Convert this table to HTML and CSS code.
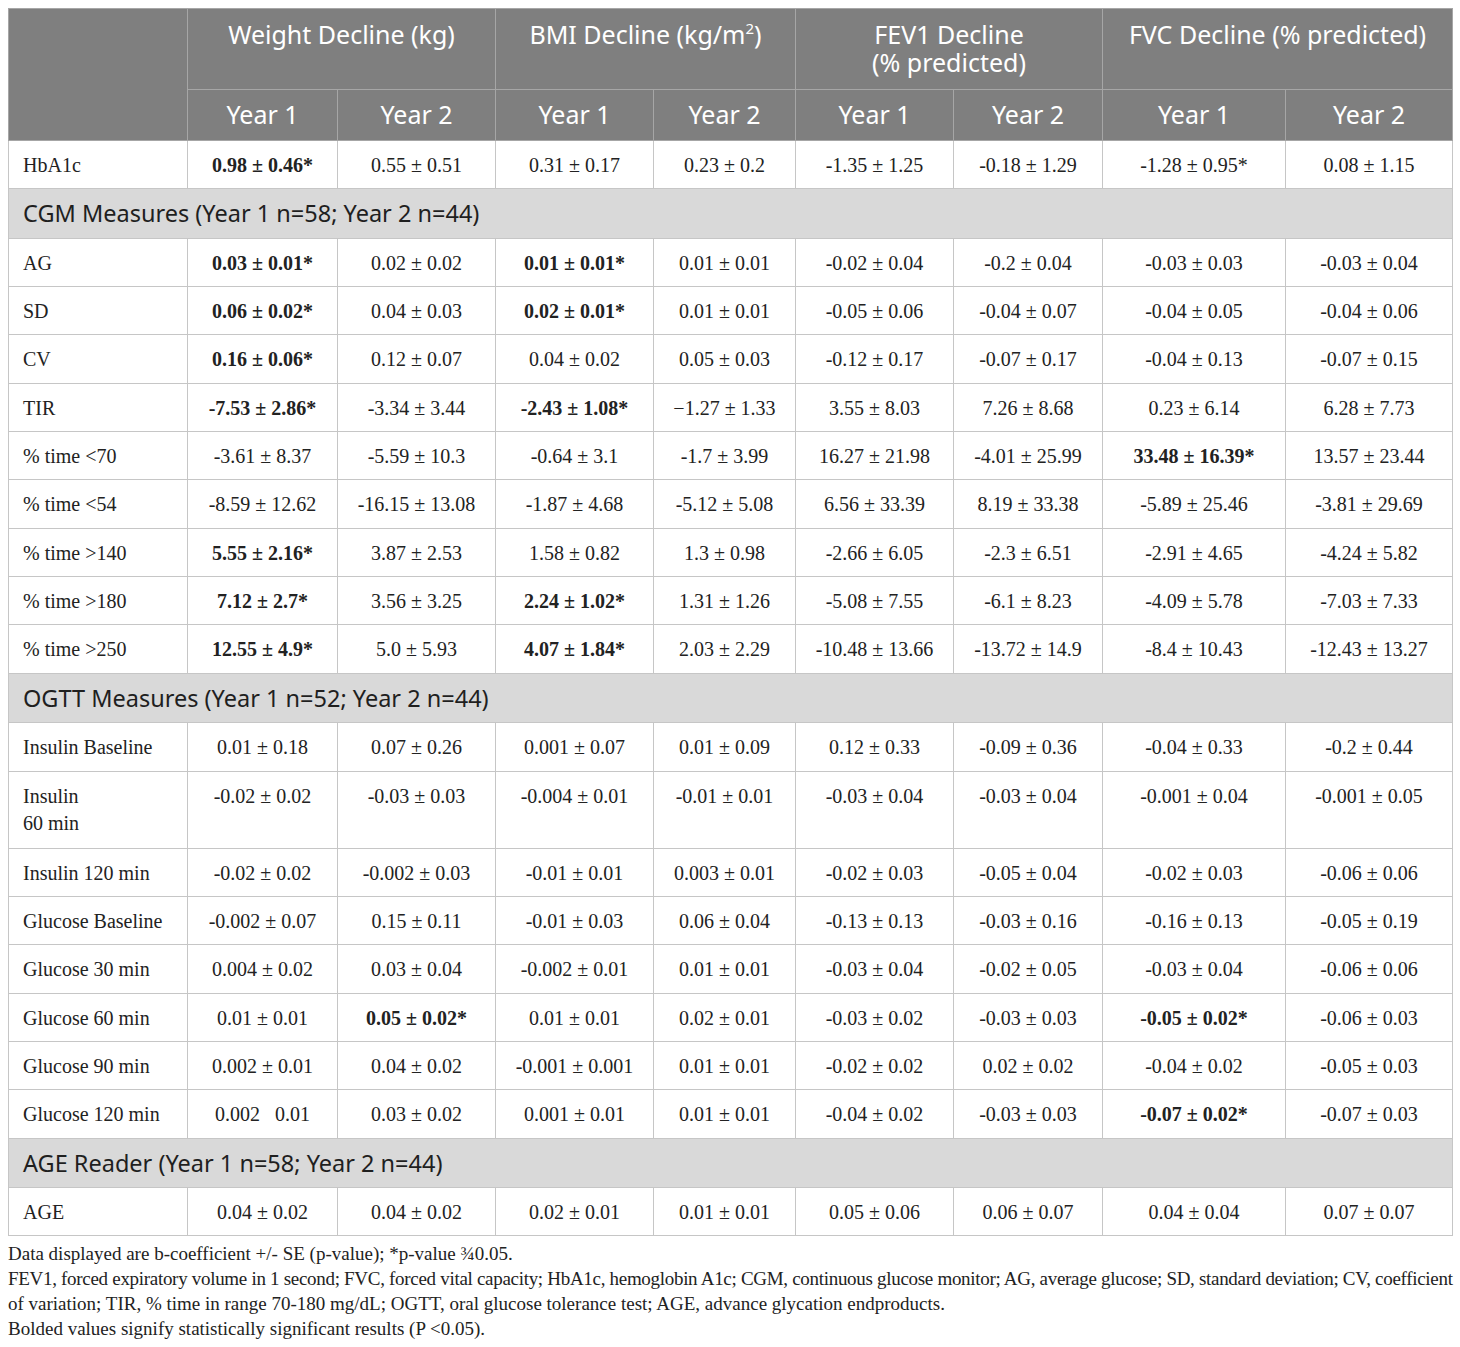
FILE: index.html
```html
<!DOCTYPE html>
<html>
<head>
<meta charset="utf-8">
<link rel="stylesheet" href="styles.css">
</head>
<body>
<div class="wrap">
<table class="tbl">
  <colgroup>
    <col class="c0"><col class="c1"><col class="c2"><col class="c3"><col class="c4"><col class="c5"><col class="c6"><col class="c7"><col class="c8">
  </colgroup>
  <thead>
    <tr class="h1">
      <th rowspan="2"></th>
      <th colspan="2">Weight Decline (kg)</th>
      <th colspan="2">BMI Decline (kg/m<sup>2</sup>)</th>
      <th colspan="2"><span class="ln">FEV1 Decline</span><span class="ln">(% predicted)</span></th>
      <th colspan="2">FVC Decline (% predicted)</th>
    </tr>
    <tr class="h2">
      <th>Year 1</th><th>Year 2</th><th>Year 1</th><th>Year 2</th><th>Year 1</th><th>Year 2</th><th>Year 1</th><th>Year 2</th>
    </tr>
  </thead>
  <tbody>
    <tr><td>HbA1c</td><td><b>0.98 ± 0.46*</b></td><td>0.55 ± 0.51</td><td>0.31 ± 0.17</td><td>0.23 ± 0.2</td><td>-1.35 ± 1.25</td><td>-0.18 ± 1.29</td><td>-1.28 ± 0.95*</td><td>0.08 ± 1.15</td></tr>
    <tr class="sec"><td colspan="9">CGM Measures (Year 1 n=58; Year 2 n=44)</td></tr>
    <tr><td>AG</td><td><b>0.03 ± 0.01*</b></td><td>0.02 ± 0.02</td><td><b>0.01 ± 0.01*</b></td><td>0.01 ± 0.01</td><td>-0.02 ± 0.04</td><td>-0.2 ± 0.04</td><td>-0.03 ± 0.03</td><td>-0.03 ± 0.04</td></tr>
    <tr><td>SD</td><td><b>0.06 ± 0.02*</b></td><td>0.04 ± 0.03</td><td><b>0.02 ± 0.01*</b></td><td>0.01 ± 0.01</td><td>-0.05 ± 0.06</td><td>-0.04 ± 0.07</td><td>-0.04 ± 0.05</td><td>-0.04 ± 0.06</td></tr>
    <tr><td>CV</td><td><b>0.16 ± 0.06*</b></td><td>0.12 ± 0.07</td><td>0.04 ± 0.02</td><td>0.05 ± 0.03</td><td>-0.12 ± 0.17</td><td>-0.07 ± 0.17</td><td>-0.04 ± 0.13</td><td>-0.07 ± 0.15</td></tr>
    <tr><td>TIR</td><td><b>-7.53 ± 2.86*</b></td><td>-3.34 ± 3.44</td><td><b>-2.43 ± 1.08*</b></td><td>−1.27 ± 1.33</td><td>3.55 ± 8.03</td><td>7.26 ± 8.68</td><td>0.23 ± 6.14</td><td>6.28 ± 7.73</td></tr>
    <tr><td>% time &lt;70</td><td>-3.61 ± 8.37</td><td>-5.59 ± 10.3</td><td>-0.64 ± 3.1</td><td>-1.7 ± 3.99</td><td>16.27 ± 21.98</td><td>-4.01 ± 25.99</td><td><b>33.48 ± 16.39*</b></td><td>13.57 ± 23.44</td></tr>
    <tr><td>% time &lt;54</td><td>-8.59 ± 12.62</td><td>-16.15 ± 13.08</td><td>-1.87 ± 4.68</td><td>-5.12 ± 5.08</td><td>6.56 ± 33.39</td><td>8.19 ± 33.38</td><td>-5.89 ± 25.46</td><td>-3.81 ± 29.69</td></tr>
    <tr><td>% time &gt;140</td><td><b>5.55 ± 2.16*</b></td><td>3.87 ± 2.53</td><td>1.58 ± 0.82</td><td>1.3 ± 0.98</td><td>-2.66 ± 6.05</td><td>-2.3 ± 6.51</td><td>-2.91 ± 4.65</td><td>-4.24 ± 5.82</td></tr>
    <tr><td>% time &gt;180</td><td><b>7.12 ± 2.7*</b></td><td>3.56 ± 3.25</td><td><b>2.24 ± 1.02*</b></td><td>1.31 ± 1.26</td><td>-5.08 ± 7.55</td><td>-6.1 ± 8.23</td><td>-4.09 ± 5.78</td><td>-7.03 ± 7.33</td></tr>
    <tr><td>% time &gt;250</td><td><b>12.55 ± 4.9*</b></td><td>5.0 ± 5.93</td><td><b>4.07 ± 1.84*</b></td><td>2.03 ± 2.29</td><td>-10.48 ± 13.66</td><td>-13.72 ± 14.9</td><td>-8.4 ± 10.43</td><td>-12.43 ± 13.27</td></tr>
    <tr class="sec"><td colspan="9">OGTT Measures (Year 1 n=52; Year 2 n=44)</td></tr>
    <tr><td>Insulin Baseline</td><td>0.01 ± 0.18</td><td>0.07 ± 0.26</td><td>0.001 ± 0.07</td><td>0.01 ± 0.09</td><td>0.12 ± 0.33</td><td>-0.09 ± 0.36</td><td>-0.04 ± 0.33</td><td>-0.2 ± 0.44</td></tr>
    <tr class="tall"><td>Insulin<br>60 min</td><td>-0.02 ± 0.02</td><td>-0.03 ± 0.03</td><td>-0.004 ± 0.01</td><td>-0.01 ± 0.01</td><td>-0.03 ± 0.04</td><td>-0.03 ± 0.04</td><td>-0.001 ± 0.04</td><td>-0.001 ± 0.05</td></tr>
    <tr><td>Insulin 120 min</td><td>-0.02 ± 0.02</td><td>-0.002 ± 0.03</td><td>-0.01 ± 0.01</td><td>0.003 ± 0.01</td><td>-0.02 ± 0.03</td><td>-0.05 ± 0.04</td><td>-0.02 ± 0.03</td><td>-0.06 ± 0.06</td></tr>
    <tr><td>Glucose Baseline</td><td>-0.002 ± 0.07</td><td>0.15 ± 0.11</td><td>-0.01 ± 0.03</td><td>0.06 ± 0.04</td><td>-0.13 ± 0.13</td><td>-0.03 ± 0.16</td><td>-0.16 ± 0.13</td><td>-0.05 ± 0.19</td></tr>
    <tr><td>Glucose 30 min</td><td>0.004 ± 0.02</td><td>0.03 ± 0.04</td><td>-0.002 ± 0.01</td><td>0.01 ± 0.01</td><td>-0.03 ± 0.04</td><td>-0.02 ± 0.05</td><td>-0.03 ± 0.04</td><td>-0.06 ± 0.06</td></tr>
    <tr><td>Glucose 60 min</td><td>0.01 ± 0.01</td><td><b>0.05 ± 0.02*</b></td><td>0.01 ± 0.01</td><td>0.02 ± 0.01</td><td>-0.03 ± 0.02</td><td>-0.03 ± 0.03</td><td><b>-0.05 ± 0.02*</b></td><td>-0.06 ± 0.03</td></tr>
    <tr><td>Glucose 90 min</td><td>0.002 ± 0.01</td><td>0.04 ± 0.02</td><td>-0.001 ± 0.001</td><td>0.01 ± 0.01</td><td>-0.02 ± 0.02</td><td>0.02 ± 0.02</td><td>-0.04 ± 0.02</td><td>-0.05 ± 0.03</td></tr>
    <tr><td>Glucose 120 min</td><td>0.002&nbsp;&nbsp; 0.01</td><td>0.03 ± 0.02</td><td>0.001 ± 0.01</td><td>0.01 ± 0.01</td><td>-0.04 ± 0.02</td><td>-0.03 ± 0.03</td><td><b>-0.07 ± 0.02*</b></td><td>-0.07 ± 0.03</td></tr>
    <tr class="sec"><td colspan="9">AGE Reader (Year 1 n=58; Year 2 n=44)</td></tr>
    <tr><td>AGE</td><td>0.04 ± 0.02</td><td>0.04 ± 0.02</td><td>0.02 ± 0.01</td><td>0.01 ± 0.01</td><td>0.05 ± 0.06</td><td>0.06 ± 0.07</td><td>0.04 ± 0.04</td><td>0.07 ± 0.07</td></tr>
  </tbody>
</table>
<div class="notes">
  <p class="n1">Data displayed are b-coefficient +/- SE (p-value); *p-value ¾0.05.</p>
  <p class="n2">FEV1, forced expiratory volume in 1 second; FVC, forced vital capacity; HbA1c, hemoglobin A1c; CGM, continuous glucose monitor; AG, average glucose; SD, standard deviation; CV, coefficient</p>
  <p class="n3">of variation; TIR, % time in range 70-180 mg/dL; OGTT, oral glucose tolerance test; AGE, advance glycation endproducts.</p>
  <p class="n4">Bolded values signify statistically significant results (P &lt;0.05).</p>
</div>
</div>
</body>
</html>
```

FILE: styles.css
```css
html, body {
  margin: 0;
  padding: 0;
  background: #ffffff;
}
body {
  padding: 8px;
}
.wrap {
  width: 1444px;
}
.tbl {
  width: 1444px;
  border-collapse: collapse;
  table-layout: fixed;
  font-family: "Liberation Serif", "Times New Roman", serif;
  color: #222222;
}
.c0 { width: 179px; }
.c1 { width: 150px; }
.c2 { width: 158px; }
.c3 { width: 158px; }
.c4 { width: 142px; }
.c5 { width: 158px; }
.c6 { width: 149px; }
.c7 { width: 183px; }
.c8 { width: 167px; }

.tbl th {
  background: #7f7f7f;
  color: #ffffff;
  font-family: "Noto Sans", "Open Sans", sans-serif;
  font-weight: 400;
  font-size: 25px;
  line-height: 28px;
  border: 1px solid #a6a6a6;
  text-align: center;
  vertical-align: top;
  padding: 0 2px;
}
.tbl th .ln {
  display: block;
  height: 28px;
}
.tbl th sup {
  font-size: 15px;
  line-height: 0;
  vertical-align: 10px;
}
.h1 th {
  height: 81px;
  box-sizing: border-box;
  padding-top: 11px;
}
.h2 th {
  height: 51px;
  box-sizing: border-box;
  padding-top: 10px;
}
.tbl td {
  border: 1px solid #c6c6c6;
  font-size: 20px;
  line-height: 27px;
  padding: 11px 4px 9.33px 4px;
  text-align: center;
  vertical-align: top;
  white-space: nowrap;
}
.tbl td:first-child {
  text-align: left;
  padding-left: 14px;
}
.tbl td b {
  font-weight: 700;
}
.tall td {
  padding-bottom: 11px;
}
.sec td {
  background: #d9d9d9;
  font-family: "Noto Sans", "Open Sans", sans-serif;
  font-size: 23.5px;
  line-height: 28px;
  padding-top: 10px;
  padding-bottom: 10.5px;
  color: #1f1f1f;
}
.notes {
  font-family: "Liberation Serif", "Times New Roman", serif;
  font-size: 19px;
  line-height: 25px;
  color: #222222;
  padding-top: 5px;
}
.notes p {
  margin: 0;
  white-space: nowrap;
}
.n2 {
  letter-spacing: -0.3px;
}
```
